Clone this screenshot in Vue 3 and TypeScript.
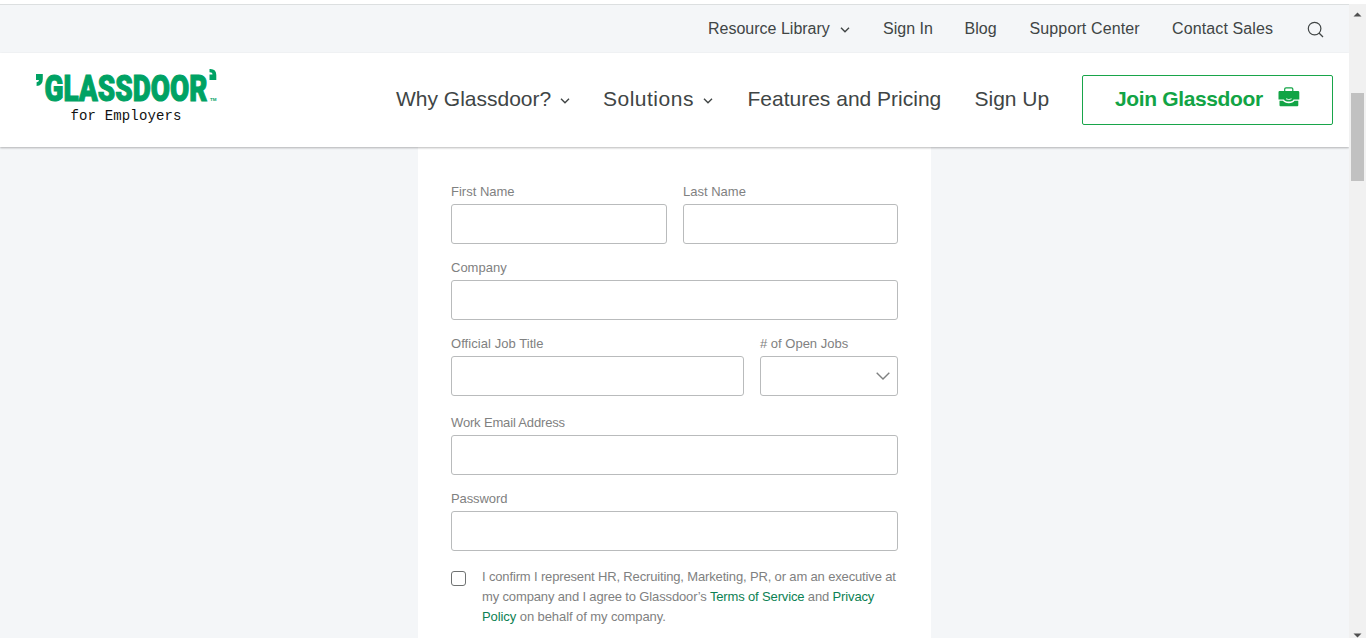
<script setup lang="ts">
interface NavItem { label: string; cls: string; menu?: boolean }

const utility: NavItem[] = [
  { label: 'Resource Library', cls: 'resource', menu: true },
  { label: 'Sign In', cls: 'signin' },
  { label: 'Blog', cls: 'blog' },
  { label: 'Support Center', cls: 'support' },
  { label: 'Contact Sales', cls: 'contact' },
]
const primary: NavItem[] = [
  { label: 'Why Glassdoor?', cls: 'why', menu: true },
  { label: 'Solutions', cls: 'solutions', menu: true },
  { label: 'Features and Pricing', cls: 'features' },
  { label: 'Sign Up', cls: 'signup' },
]
</script>

<template>
  <div class="window">
    <div class="page">
      <nav class="utility">
        <a v-for="n in utility" :key="n.label" :class="n.cls"><span>{{ n.label }}</span><svg v-if="n.menu" class="chev" width="10" height="6" viewBox="0 0 10 6"><path d="M1 .8 5 4.8 9 .8" /></svg></a>
        <svg class="search" width="18" height="18" viewBox="0 0 18 18"><circle cx="7.6" cy="7.6" r="6.3" /><path d="M12 12 16 16" /></svg>
      </nav>
      <header class="header">
        <svg class="logo" width="190" height="75" viewBox="0 -13 190 75">
          <path class="mark" d="M2 8H8.800V13Q8.800 19.500 2.600 20V16.300Q5 16 5 14H2Z" />
          <text class="word" x="10.500" y="34.600" textLength="163" lengthAdjust="spacingAndGlyphs">GLASSDOOR</text>
          <path class="mark" d="M175.500 3Q182.300 2.500 182.300 9V14H175.500V8.500H178.500Q178.500 6.100 175.500 6.200Z" />
          <text class="tm" x="176" y="34.500" textLength="6.500" lengthAdjust="spacingAndGlyphs">TM</text>
          <text class="sub" x="36.500" y="54" textLength="111" lengthAdjust="spacing">for Employers</text>
        </svg>
        <nav class="primary">
          <a v-for="n in primary" :key="n.label" :class="n.cls"><span>{{ n.label }}</span><svg v-if="n.menu" class="chev" width="10" height="6" viewBox="0 0 10 6"><path d="M1 .8 5 4.800 9 .8" /></svg></a>
        </nav>
        <a class="join"><span>Join Glassdoor</span>
          <svg width="22" height="20" viewBox="0 0 22 20">
            <path class="handle" d="M6.700 5V2Q6.700.8 8 .8H13.500Q14.800.8 14.800 2V5" />
            <path d="M1.500 4H20Q21.300 4 21.300 5.300V12.500H15.500Q14.800 14.500 10.800 14.500T6 12.500H.5V5.300Q.5 4 1.500 4Z" />
            <path d="M1.500 13.800H5Q6.500 16.200 10.800 16.200T16.500 13.800H20.300V18.300Q20.300 19.300 19.300 19.300H2.500Q1.500 19.300 1.500 18.300Z" />
            <path class="latch" d="M8 11.800Q10.800 13.400 13.600 11.800" />
          </svg>
        </a>
      </header>
      <main class="card">
        <form>
          <div class="row names">
            <label>First Name<input type="text" /></label>
            <label>Last Name<input type="text" /></label>
          </div>
          <label class="company">Company<input type="text" /></label>
          <div class="row job">
            <label class="title">Official Job Title<input type="text" /></label>
            <label># of Open Jobs
              <span class="select"><svg width="14" height="8" viewBox="0 0 14 8"><path d="M.7.7 7 7 13.300.7" /></svg></span>
            </label>
          </div>
          <label class="email"><span>Work Email Address</span><input type="text" /></label>
          <label class="password">Password<input type="password" /></label>
          <div class="confirm">
            <span class="box"></span>
            <p>
              <span class="l1">I confirm I represent HR, Recruiting, Marketing, PR, or am an executive at</span><br />
              <span class="l2">my company and I agree to Glassdoor’s <a>Terms of Service</a> and <a>Privacy</a></span><br />
              <span class="l3"><a>Policy</a> on behalf of my company.</span>
            </p>
          </div>
        </form>
      </main>
    </div>
    <aside class="scroll">
      <svg width="9" height="5" viewBox="0 0 9 5"><path d="M.5 4.500 4.500.5 8.500 4.500Z" /></svg>
      <div class="thumb"></div>
      <svg class="down" width="9" height="5" viewBox="0 0 9 5"><path d="M.5.5 4.500 4.500 8.500.5Z" /></svg>
    </aside>
  </div>
</template>

<style>
body { margin: 0; overflow: hidden; background: #fff; }
</style>

<style scoped>
* { box-sizing: border-box; }
.window {
  display: flex; width: 1366px; height: 638px; padding-top: 4px; background: #fff;
  font-family: "Liberation Sans", Arial, sans-serif;
}
.page { width: 1349px; height: 634px; border-top: 1px solid #dcdfe0; background: #f4f6f8; overflow: hidden; }
.utility {
  display: grid; grid-template-columns: 175px 81.500px 65px 142.500px 135px 20px;
  height: 48px; padding-left: 708px; align-items: center; font-size: 16px; line-height: 20px; color: #404545;
}
.utility a, .primary a { display: flex; align-items: center; white-space: nowrap; }
.chev { margin-left: 10px; margin-top: 1px; }
.chev path, .search path, .search circle { fill: none; stroke: #404545; stroke-width: 1.4; }
.search path, .search circle { stroke-width: 1.2; }
.search { margin-top: 2px; }
.support { letter-spacing: .13px; }
.contact { letter-spacing: .12px; }
.header {
  position: relative; display: flex; width: 1349px; height: 94px; background: #fff;
  box-shadow: 0 1px 2px rgba(0, 0, 0, .28);
}
.logo { flex: none; margin: 0 0 0 34px; overflow: visible; }
.mark { fill: #00a264; }
.word { font: 900 36.500px Roboto, sans-serif; fill: #00a264; stroke: #00a264; stroke-width: 1.1px; }
.tm { font: 700 4px "Liberation Sans", sans-serif; fill: #00a264; }
.sub { font: 14px "Liberation Mono", monospace; fill: #111; }
.primary {
  display: grid; grid-template-columns: 207px 144.500px 227px 107.500px; width: 686px; height: 92px;
  margin-left: 172px; font-size: 21px; color: #404545;
}
.primary .chev { margin-top: 3px; margin-left: 9px; }
.solutions { letter-spacing: .5px; }
.join {
  display: flex; justify-content: space-between; flex: none; width: 251px; height: 50px;
  margin-top: 22px; padding: 10px 32px 0 32px; border: 1px solid #18a54a; border-radius: 2px;
  font-size: 21px; font-weight: 700; line-height: 26px; letter-spacing: -.36px; color: #12a445; white-space: nowrap;
}
.join svg { margin-top: 1px; fill: #12a445; }
.join .handle { fill: none; stroke: #12a445; stroke-width: 1.2; }
.join .latch { fill: none; stroke: #fff; stroke-width: .9; }
.card { width: 512.500px; height: 500px; margin-left: 418px; padding: 35px 32px 0 33px; background: #fff; }
form { width: 447px; font-size: 13px; line-height: 20px; color: #7f8181; }
label { display: block; white-space: nowrap; }
.row { display: grid; column-gap: 16px; }
.names { grid-template-columns: 216px 215px; }
.job { grid-template-columns: 293px 138px; }
input, .select {
  display: block; width: 100%; height: 40px; margin: 2px 0 0; padding: 0 10px;
  border: 1px solid #b9bbbc; border-radius: 3px; background: #fff; outline: 0;
}
.company, .job { margin-top: 14px; }
.title { letter-spacing: .06px; }
.email { margin-top: 17px; letter-spacing: -.16px; }
.password { margin-top: 14px; letter-spacing: -.1px; }
.select { display: flex; align-items: center; justify-content: flex-end; padding-right: 7px; }
.select path { fill: none; stroke: #7f8181; stroke-width: 1.4; }
.confirm { display: flex; margin-top: 16px; }
.box { flex: none; width: 15px; height: 15px; margin-top: 4px; border: 1px solid #6f7272; border-radius: 3px; }
p { margin: 0 0 0 16px; line-height: 20px; white-space: nowrap; }
p a { color: #0c8153; }
.l1 { letter-spacing: -.15px; }
.l2 { letter-spacing: -.145px; }
.l3 { letter-spacing: -.08px; }
.scroll { display: flex; flex-direction: column; align-items: center; width: 17px; height: 634px; padding-top: 8px; background: #f1f1f1; }
.scroll svg { fill: #505050; }
.thumb { width: 13px; height: 88px; margin-top: 76px; background: #c1c1c1; }
.down { margin-top: auto; }
</style>
